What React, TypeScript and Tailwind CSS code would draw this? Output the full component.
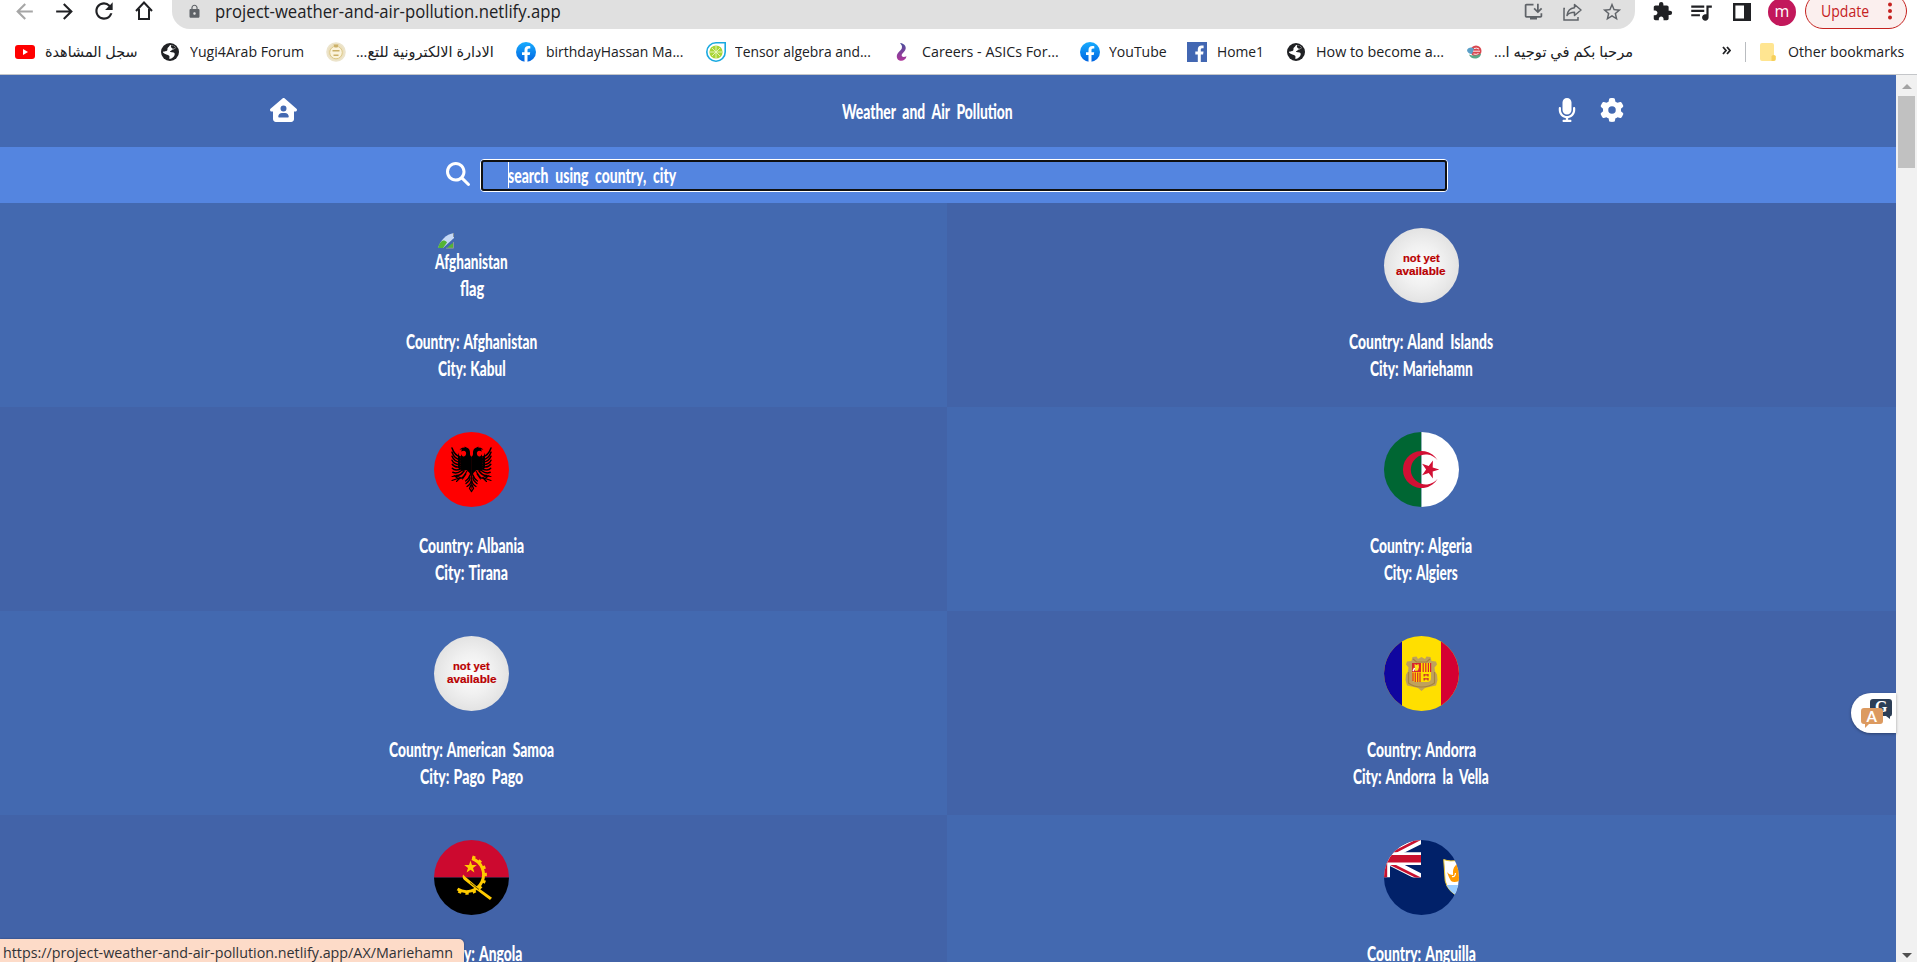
import { useLayoutEffect, useRef, useState } from "react";
import type { ReactNode } from "react";
import { FaGear, FaHouseUser, FaMagnifyingGlass, FaMicrophone } from "react-icons/fa6";
import {
  MdArrowBack,
  MdArrowForward,
  MdExtension,
  MdInstallDesktop,
  MdLock,
  MdQueueMusic,
  MdRefresh,
  MdStarBorder,
} from "react-icons/md";

/** One line of text condensed or widened horizontally to a given width. */
function Fit({ w, className = "", dir = "ltr", children }: { w: number; className?: string; dir?: "ltr" | "rtl"; children: ReactNode }) {
  const ref = useRef<HTMLSpanElement>(null);
  const [k, setK] = useState(1);
  useLayoutEffect(() => {
    const el = ref.current;
    if (el) setK(w / el.offsetWidth);
  }, [w]);
  return (
    <span className={"flex shrink-0 justify-start whitespace-nowrap " + className} style={{ width: w }}>
      <span ref={ref} dir={dir} className="block shrink-0 origin-left" style={{ transform: `scaleX(${k})` }}>
        {children}
      </span>
    </span>
  );
}

/* ---------- bookmark icons ---------- */

const YouTube = () => (
  <svg width="20" height="14" viewBox="0 0 20 14">
    <rect width="20" height="14" rx="3" fill="#f00" />
    <path d="M8 4l5 3-5 3z" fill="#fff" />
  </svg>
);
const Globe = () => (
  <svg width="18" height="18" viewBox="0 0 18 18">
    <circle cx="9" cy="9" r="9" fill="#202124" />
    <path d="M9 2c2.500 0 4.500 1 6 2.800-1 .6-1.700 1.800-3.200 1.700-1.300 0-1 1.300-2.300 1.500-1 .2-.6 1.300 1.500 1.200 2.400 0 3.200 1.300 2.500 3-.6 1.500-2.300 3.500-5 3.800-.6-1 .6-2.200-.4-3.200C7 11.700 4 11.500 2 9.500 1.800 8 4 8.800 5.500 8 7.300 7 5.800 5.500 7 4.500 8 3.700 8.500 3 9 2z" fill="#fff" />
    <path d="M10 2.200c2 .2 3.700 1.200 5 2.600-1 .6-2 1.200-3 1-1.500-.6-2.400-2-2-3.600z" fill="#202124" />
  </svg>
);
const Crest = () => (
  <svg width="20" height="20" viewBox="0 0 20 20">
    <circle cx="10" cy="10" r="9" fill="#ece0bf" stroke="#ece4cc" strokeWidth="1.600" />
    <circle cx="10" cy="10.500" r="6.300" fill="#fbf3dc" stroke="#dcc888" />
    <path d="M7.500 2.500h5l-1 3h-3z M6.500 8h7v1.500h-7z M7.500 12.500h5V14h-5z" fill="#cbb068" />
  </svg>
);
const Facebook = () => (
  <svg width="20" height="20" viewBox="0 0 20 20">
    <defs>
      <linearGradient id="fb" x1="0" y1="0" x2="0" y2="1">
        <stop stopColor="#18acfe" />
        <stop offset="1" stopColor="#0163e0" />
      </linearGradient>
    </defs>
    <circle cx="10" cy="10" r="10" fill="url(#fb)" />
    <path d="M8.500 20v-7H6v-2.800h2.500V8c0-2.600 1.500-4 3.800-4 1 0 2 .2 2 .2v2.400H13c-1.200 0-1.500.8-1.500 1.500v2.100h2.700l-.5 2.800h-2.200v7z" fill="#fff" />
  </svg>
);
const FacebookSquare = () => (
  <svg width="20" height="20" viewBox="0 0 20 20">
    <rect width="20" height="20" fill="#4267b2" />
    <path d="M10.800 20v-7.500H8.300V9.600h2.500V7.400c0-2.500 1.500-3.900 3.800-3.900 1 0 2 .1 2 .1v2.600h-1.300c-1.100 0-1.500.6-1.500 1.400v2h2.700l-.4 2.900h-2.300V20z" fill="#fff" />
  </svg>
);
const Lime = () => (
  <svg width="20" height="20" viewBox="0 0 20 20">
    <path d="M10 .8h9.200V10A9.200 9.200 0 1 1 10 .8z" fill="#fff" stroke="#19a9e0" strokeWidth="1.600" />
    <circle cx="10" cy="10" r="6.600" fill="#a9d535" />
    <path d="M10 4v12M4 10h12M6 6l8 8M14 6l-8 8" stroke="#e9f6c0" strokeWidth=".9" />
  </svg>
);
const Ribbon = () => (
  <svg width="11" height="20" viewBox="0 0 11 20">
    <defs>
      <linearGradient id="rb" x1="0" y1="0" x2="0" y2="1">
        <stop stopColor="#4a4e9c" />
        <stop offset="1" stopColor="#b0359a" />
      </linearGradient>
    </defs>
    <path d="M4 1c5 .5 7 4.500 5 7.500C7.500 11 5.500 11.500 5.700 13.500c.3 2 2.800 1.500 4.800.8-.5 3.500-4 5.200-7 4.200C.5 17.500 0 13.500 2 11c2-2.500 4-3.500 4-6 0-1.700-1-2.500-2-4z" fill="url(#rb)" />
  </svg>
);
const Swirl = () => (
  <svg width="15" height="14" viewBox="0 0 15 14">
    <circle cx="9" cy="6" r="5.500" fill="#d9474f" />
    <path d="M0 5c2-3 5-3 7-1L5 9C2 9 0 7 0 5z" fill="#5a9fc7" />
    <path d="M2 9.500c3 1.500 8 1.500 12-1 0 3-3 5-6 5s-5-1.500-6-4z" fill="#58a888" />
    <path d="M7 3.500q3-1 5 .5M6 6.200h7M6.500 9q3 1 5-.5" stroke="#fff" strokeWidth=".9" fill="none" />
  </svg>
);

type Mark = { icon: ReactNode; box: string; w: number; text: string; rtl?: boolean };
const bookmarks: Mark[] = [
  { icon: <YouTube />, box: "ml-[15px] gap-[10px]", w: 93, text: "سجل المشاهدة", rtl: true },
  { icon: <Globe />, box: "ml-[23px] gap-[11px]", w: 114, text: "Yugi4Arab Forum" },
  { icon: <Crest />, box: "ml-[22px] gap-[10px]", w: 138, text: "الادارة الالكترونية للتع...", rtl: true },
  { icon: <Facebook />, box: "ml-[22px] gap-[10px]", w: 137, text: "birthdayHassan Ma..." },
  { icon: <Lime />, box: "ml-[23px] gap-[9px]", w: 136, text: "Tensor algebra and..." },
  { icon: <Ribbon />, box: "ml-[25px] gap-[15px]", w: 137, text: "Careers - ASICs For..." },
  { icon: <Facebook />, box: "ml-[21px] gap-[9px]", w: 58, text: "YouTube" },
  { icon: <FacebookSquare />, box: "ml-[20px] gap-[10px]", w: 47, text: "Home1" },
  { icon: <Globe />, box: "ml-[23px] gap-[11px]", w: 128, text: "How to become a..." },
  { icon: <Swirl />, box: "ml-[23px] gap-[12px]", w: 139, text: "مرحبا بكم في توجيه ا...", rtl: true },
];

function Toolbar() {
  return (
    <div className="flex h-[29px] items-start text-[#202124]">
      <div className="flex h-[22px] w-[172px] shrink-0 items-center pl-[12px]">
        <MdArrowBack size={25} className="text-[#a6a6a6]" />
        <MdArrowForward size={25} className="ml-[15px]" />
        <MdRefresh size={26} className="ml-[14px]" />
        <svg width="18" height="20" viewBox="0 0 18 20" className="ml-[18px]" fill="none" stroke="currentColor" strokeWidth="2">
          <path d="M1 10l8-8.500 8 8.500M4 8v10h10V8" />
        </svg>
      </div>
      <div className="flex h-[29px] w-[1463px] shrink-0 items-center rounded-b-[18px] bg-[#e0e0e0] pb-[6px] pl-[15px] pr-[12px]">
        <MdLock size={15} className="text-[#5f6368]" />
        <Fit w={346} className="ml-[13px] text-[17.500px] leading-[23px]">
          project-weather-and-air-pollution.netlify.app
        </Fit>
        <div className="ml-auto flex items-center text-[#5f6368]">
          <MdInstallDesktop size={21} />
          <svg width="21" height="20" viewBox="0 0 21 20" className="ml-[18px]" fill="none" stroke="currentColor" strokeWidth="1.500">
            <path d="M3 6.500H2V18h14v-3" />
            <path d="M12.500 2.500l6.500 5.500-6.500 5.500v-3.200c-3.500 0-6 1-7.500 3.200.5-4 3-7.300 7.500-7.800z" strokeLinejoin="round" />
          </svg>
          <MdStarBorder size={22} className="ml-[18px]" />
        </div>
      </div>
      <div className="flex h-[23px] items-center">
        <MdExtension size={21} className="ml-[17px]" />
        <MdQueueMusic size={26} className="ml-[15px]" />
        <svg width="18" height="18" viewBox="0 0 18 18" className="ml-[19px]">
          <path d="M1.200 1.200h15.600v15.600H1.200z" fill="none" stroke="#202124" strokeWidth="2.400" />
          <path d="M11 1h6v16h-6z" fill="#202124" />
        </svg>
        <div className="ml-[17px] flex size-[28px] items-center justify-center rounded-full bg-[#c2185b] text-[16px] leading-[20px] text-white">
          <span className="-mt-[2px]">m</span>
        </div>
        <div className="-mt-px ml-[9px] flex h-[36px] w-[102px] items-center rounded-[18px] border-[1.500px] border-[#c5221f] bg-[#fbefee] pb-px pl-[15px] text-[#c5221f]">
          <Fit w={48} className="text-[15.500px] leading-[20px]">Update</Fit>
          <svg width="4" height="18" viewBox="0 0 4 18" className="ml-[19px]" fill="currentColor">
            <circle cx="2" cy="2.500" r="2" />
            <circle cx="2" cy="9" r="2" />
            <circle cx="2" cy="15.500" r="2" />
          </svg>
        </div>
      </div>
    </div>
  );
}

function Bookmarks() {
  return (
    <div className="flex h-[46px] items-center border-b border-[#c4c6c9] text-[15px] text-[#202124]">
      {bookmarks.map((b) => (
        <div key={b.text} className={"flex shrink-0 items-center " + b.box}>
          {b.icon}
          <Fit w={b.w} dir={b.rtl ? "rtl" : "ltr"} className="pb-[2px] leading-[20px]">
            {b.text}
          </Fit>
        </div>
      ))}
      <svg width="9" height="9" viewBox="0 0 9 9" className="-mt-[2px] ml-auto" fill="none" stroke="#202124" strokeWidth="1.800">
        <path d="M1 1l3 3.500L1 8M5 1l3 3.500L5 8" />
      </svg>
      <div className="ml-[14px] h-[20px] w-px bg-[#b9bcc0]" />
      <svg width="16" height="18" viewBox="0 0 16 18" className="ml-[14px]">
        <path d="M2 0h10a2 2 0 0 1 2 2v10l2 1v3a2 2 0 0 1-2 2H2a2 2 0 0 1-2-2V2a2 2 0 0 1 2-2z" fill="#ffe591" />
        <path d="M11.500 18v-4.500q0-1.500 2-1.500t2 1.500V16q0 2-2 2z" fill="#f6cf5b" />
      </svg>
      <Fit w={116} className="ml-[12px] mr-[13px] pb-[2px] leading-[20px]">Other bookmarks</Fit>
    </div>
  );
}

/* ---------- flags ---------- */

function Disc({ children, id }: { children: ReactNode; id: string }) {
  return (
    <svg width="75" height="75" viewBox="0 0 75 75">
      <clipPath id={id}>
        <circle cx="37.500" cy="37.500" r="37.500" />
      </clipPath>
      <g clipPath={`url(#${id})`}>{children}</g>
    </svg>
  );
}

function Missing() {
  return (
    <div className="flex size-[75px] flex-col items-center rounded-full bg-[radial-gradient(circle,#fdfdfd_0%,#f0f0f0_40%,#d6d6d6_100%)] pt-[23px] font-['Liberation_Sans',sans-serif] text-[11.500px] font-bold leading-[14px] text-[#b90000] [-webkit-text-stroke:0.2px_#b90000]">
      <Fit w={37}>not yet</Fit>
      <Fit w={50} className="-mt-px">available</Fit>
    </div>
  );
}

function BrokenImage() {
  return (
    <div className="flex size-[75px] flex-col text-[20px] leading-[27px]">
      <svg width="16" height="16" viewBox="0 0 16 16" className="ml-[4px] mt-[5px] shrink-0">
        <path d="M0 15C2 8 8 1 16 0v5L5 15z" fill="#c6d9f5" />
        <path d="M0 15c1-4 2.500-6.500 5-7.500 2 0 3 .5 4 2L5 15z" fill="#54b435" />
        <path d="M9 15l3-3 3-2v5z" fill="#54b435" />
        <path d="M15.500 0v4M8 15.200h7.500V9" stroke="#8a949c" fill="none" />
      </svg>
      <Fit w={73} className="-mt-px ml-px">Afghanistan</Fit>
      <Fit w={24} className="ml-[26px]">flag</Fit>
    </div>
  );
}

const EagleHalf = () => (
  <g>
    <path d="M37.700 25c-1-1-2-2-1.700-4 .2-2.500-1-5-3.500-5.600l-2-.8.300 1-2.600.2-2.700 1.700 2.800.1-1.500 1.800 3-.6c1.500.2 2.500 1.200 2.300 3-.3 2-1.500 3-3 2.700-1-.3-1.700-1.500-2-2.500l-1 15 2.500 2 4-1 3 3 1 3 1.100 17z" />
    <path d="M26.500 25c-4-1-7-4.500-8.500-9M26.500 27.500c-4 0-7-3-8.500-7.200M26.500 30c-4 0-7-2-8.500-5.700M26.500 32.500c-4 .3-7-1-8.500-4.200M26.500 34.700c-4 1-6.500.2-8.300-2.400M27 36.700c-4 1.800-7 1.500-8.700-.4M27.500 38.500c-3 2.500-6 3-8.700 1.800M30 39c-3 4-5 5-8 4.500" fill="none" stroke="#000" strokeWidth="1.500" strokeLinecap="round" />
    <path d="M24 20.500q1 4 3 6l-1 12-2-3z" />
    <path d="M33 39c-2 3-3 6-6 7.500M27 46l-4-2-5 .5M27 46l-4 .8-5 1.700M26 46l-3.500 3.500M24 46.500l-4-3M32 42l-3.500 5" fill="none" stroke="#000" strokeWidth="1.100" strokeLinecap="round" />
    <path d="M36 43c-1 3-2.500 5-4.500 6M36 46c0 2-2 4-4 5.500M37 49c0 2-1.500 4-4 5.500M37 53l-1.500 3.500 2 3" fill="none" stroke="#000" strokeWidth="1.300" strokeLinecap="round" />
  </g>
);

const Albania = () => (
  <Disc id="al">
    <path d="M0 0h75v75H0z" fill="#f00" />
    <EagleHalf />
    <g transform="translate(75 0) scale(-1 1)">
      <EagleHalf />
    </g>
  </Disc>
);

const Algeria = () => (
  <Disc id="dz">
    <path d="M0 0h37.500v75H0z" fill="#006633" />
    <path d="M37.500 0H75v75H37.500z" fill="#fff" />
    <path d="M53.800 28.500a18.600 18.600 0 1 0 0 18 15 15 0 1 1 0-18z" fill="#d21034" />
    <path d="M55.300 37.500l-6.600-2.100.2-6.900-4.200 5.500-6.600-2.300 4 5.800-4 5.800 6.600-2.300 4.200 5.500-.2-6.900z" fill="#d21034" />
  </Disc>
);

const Andorra = () => (
  <Disc id="ad">
    <path d="M0 0h75v75H0z" fill="#ffdf00" />
    <path d="M0 0h18v75H0z" fill="#10069f" />
    <path d="M57 0h18v75H57z" fill="#d50032" />
    <path d="M34 23l3.500-2 3.500 2 1.500-2.500 4 .5 1 4 4.500.5 1 3-2.500 3 .5 4 2 3 .5 5.500-1.500 5.500-7 1.500-4 1-3.500 3-3.500-3-4-1-7-1.500-1.500-5.500.5-5.500 2-3 .5-4-2.500-3 1-3 4.500-.5 1-4 4-.5z" fill="#bfa15c" />
    <path d="M24.500 36v11q5 4 13 4t13-4V36M29 23l3.500 3h10l3.500-3" fill="none" stroke="#a5833f" strokeWidth="1.200" />
    <path d="M28 27h19v15q0 4-4 4H32q-4 0-4-4z" fill="#ffdf00" />
    <path d="M28 27h9v9h-9z" fill="#d8262e" />
    <path d="M30.500 28l2 1 2-1 .5 3-1 3.500-3 .5z" fill="#ffe21a" />
    <path d="M29 35q1-1.500 1.500-3" stroke="#fff" strokeWidth="1.500" fill="none" />
    <path d="M39.200 27v9M41.800 27v9M44.400 27v9M46.600 27v9M29 36.500V45M31.300 36.500V46M33.700 36.500V46M36 36.500V46" stroke="#d8262e" strokeWidth="1.200" />
    <path d="M39.500 38.800h5M39.500 42.800h5M40.200 38v2.500M44 38v2.500M40.200 42v2.500M44 42v2.500" stroke="#c9352b" strokeWidth="1.300" />
  </Disc>
);

const Angola = () => (
  <Disc id="ao">
    <path d="M0 0h75v37.500H0z" fill="#cc092f" />
    <path d="M0 37.500h75V75H0z" fill="#000" />
    <path d="M38 18.500A17 17 0 1 1 23.500 49" fill="none" stroke="#ffcb00" strokeWidth="3" />
    <path d="M38.300 17A18.500 18.500 0 1 1 22.500 50" fill="none" stroke="#ffcb00" strokeWidth="3" strokeDasharray="3.200 4" />
    <path d="M36.500 20.500l1.500 4.600h4.800L39 28l1.400 4.600-3.900-2.800-3.900 2.800L34 28l-3.800-2.900H35z" fill="#ffcb00" />
    <path d="M29 34.500c-1 3 0 5 2.500 6.500L44 51l12 9 2-2.200-12.500-9L34 39c-2-1.500-3.500-3-5-4.500z" fill="#ffcb00" />
    <path d="M36 42.500l9 7" stroke="#000" strokeWidth=".6" />
  </Disc>
);

const Anguilla = () => (
  <Disc id="ai">
    <clipPath id="canton">
      <path d="M0 0h37v37.500H0z" />
    </clipPath>
    <path d="M0 0h75v75H0z" fill="#012169" />
    <g clipPath="url(#canton)">
      <path d="M0 18.700L37 0M0 18.700l37 18.800" stroke="#fff" strokeWidth="7.500" />
      <path d="M0 17.500L37-1.500M2 21.500l37 18.500" stroke="#c8102e" strokeWidth="2.600" />
      <path d="M0 12.200h37v12.800H0z M0 0h6v37.500H0z" fill="#fff" />
      <path d="M0 15h37v7.500H0z M0 0h3.200v37.500H0z" fill="#c8102e" />
    </g>
    <path d="M59.700 19.500q6 2.500 16 .5v37q-12-5-14.500-16z" fill="#fff" stroke="#e8c533" strokeWidth="1" />
    <path d="M62.500 45h13v12q-9-4-13-12z" fill="#9cf" />
    <path d="M69 32q0-5 4-8l2 1v16q-5 2-8 0-2-3-4-9 2 3 6 3z" fill="#ff9a00" />
    <path d="M68 36.500q3 1 3.500-3.500" stroke="#fff" strokeWidth="1.200" fill="none" />
  </Disc>
);

type City = { flag: ReactNode; country: string; cw: number; city: string; w: number };
const cities: City[] = [
  { flag: <BrokenImage />, country: "Afghanistan", cw: 131, city: "Kabul", w: 68 },
  { flag: <Missing />, country: "Aland Islands", cw: 144, city: "Mariehamn", w: 103 },
  { flag: <Albania />, country: "Albania", cw: 105, city: "Tirana", w: 73 },
  { flag: <Algeria />, country: "Algeria", cw: 102, city: "Algiers", w: 74 },
  { flag: <Missing />, country: "American Samoa", cw: 165, city: "Pago Pago", w: 103 },
  { flag: <Andorra />, country: "Andorra", cw: 109, city: "Andorra la Vella", w: 136 },
  { flag: <Angola />, country: "Angola", cw: 101, city: "", w: 0 },
  { flag: <Anguilla />, country: "Anguilla", cw: 109, city: "", w: 0 },
];

function Line({ label, value, w }: { label: string; value: string; w: number }) {
  return (
    <Fit w={w}>
      <span className="[word-spacing:1px]">{label}: </span>
      <span className="[word-spacing:5px]">{value}</span>
    </Fit>
  );
}

function Card({ c, i }: { c: City; i: number }) {
  const light = i % 4 === 0 || i % 4 === 3;
  return (
    <div
      className={
        "flex h-[204px] flex-col items-center pt-[25px] text-[20px] leading-[27px] " +
        (light ? "bg-[#4369b0] " : "bg-[#4263a8] ") +
        (i % 2 === 0 ? "pr-[4px]" : "pr-[1px]")
      }
    >
      <div className="mb-[25px] size-[75px] shrink-0">{c.flag}</div>
      <Line label="Country" value={c.country} w={c.cw} />
      {c.city && <Line label="City" value={c.city} w={c.w} />}
    </div>
  );
}

export default function App() {
  return (
    <div className="relative flex h-[962px] w-[1917px] flex-col overflow-hidden bg-white font-['Open_Sans','DejaVu_Sans',sans-serif]">
      <Toolbar />
      <Bookmarks />
      <div className="flex min-h-0 flex-1">
        <main className="h-[887px] w-[1896px] overflow-hidden font-['Lato',sans-serif] font-black text-white">
          <header className="flex h-[72px] items-center bg-[#4369b2] pl-[270px] pr-[272px] text-[20px]">
            <FaHouseUser className="-mt-[2px] h-[24px] w-[27px]" />
            <Fit w={171} className="ml-[545px] leading-[27px] [word-spacing:5px]">Weather and Air Pollution</Fit>
            <FaMicrophone className="-mt-[2px] ml-auto h-[24px] w-[18px]" />
            <FaGear className="-mt-[2px] ml-[24px] size-[24px]" />
          </header>
          <div className="flex h-[56px] items-center bg-[#5485e0] pl-[446px]">
            <FaMagnifyingGlass className="-mt-[2px] size-[24px] shrink-0" />
            <div className="ml-[10px] flex h-[33px] w-[968px] items-center rounded-[4px] border border-white">
              <div className="flex h-full w-full items-center rounded-[3px] border-2 border-[#101010] pl-[25px]">
                <div className="-mr-px h-[26px] w-px shrink-0 bg-white" />
                <Fit w={168} className="text-[20px] leading-[25px] [word-spacing:5px]">search using country, city</Fit>
              </div>
            </div>
          </div>
          <div className="grid grid-cols-[947px_949px]">
            {cities.map((c, i) => (
              <Card key={c.country} c={c} i={i} />
            ))}
          </div>
        </main>
        <div className="flex w-[21px] flex-col items-center bg-[#f1f1f1] pb-[4px] pt-[9px]">
          <svg width="10" height="5" viewBox="0 0 10 5" className="shrink-0">
            <path d="M0 5l5-5 5 5z" fill="#a3a3a3" />
          </svg>
          <div className="mt-[7px] h-[72px] w-[17px] bg-[#c1c1c1]" />
          <svg width="10" height="5" viewBox="0 0 10 5" className="mt-auto shrink-0">
            <path d="M0 0l5 5 5-5z" fill="#505050" />
          </svg>
        </div>
      </div>

      <div className="absolute left-[1851px] top-[693px] flex h-[40px] w-[45px] items-center rounded-l-[20px] bg-white pl-[10px] shadow-[0_1px_3px_rgba(0,0,0,0.35)]">
        <svg width="31" height="30" viewBox="0 0 31 30">
          <path d="M12 1h16q3 0 3 3v12q0 2-2 2.500V21l-4-3H12q-3 0-3-3V4q0-3 3-3z" fill="#2c3e56" />
          <text x="14" y="14" fontSize="16" fontWeight="700" fill="#fff" fontFamily="Liberation Serif">G</text>
          <path d="M3 10h16q3 0 3 3v10q0 3-3 3H8l-4 4v-4H3q-3 0-3-3V13q0-3 3-3z" fill="#dc9a60" />
          <text x="5.500" y="23.500" fontSize="15" fontWeight="700" fill="#fff" fontFamily="Lato">A</text>
        </svg>
      </div>

      <div className="absolute bottom-0 left-0 flex h-[23px] w-[464px] items-center rounded-tr-[5px] bg-[#fddbc8] pl-[3px] pt-[2px] text-[15px] text-[#303236] shadow-[0_0_2px_rgba(0,0,0,0.4)]">
        <Fit w={450} className="leading-[20px]">https://project-weather-and-air-pollution.netlify.app/AX/Mariehamn</Fit>
      </div>
    </div>
  );
}
